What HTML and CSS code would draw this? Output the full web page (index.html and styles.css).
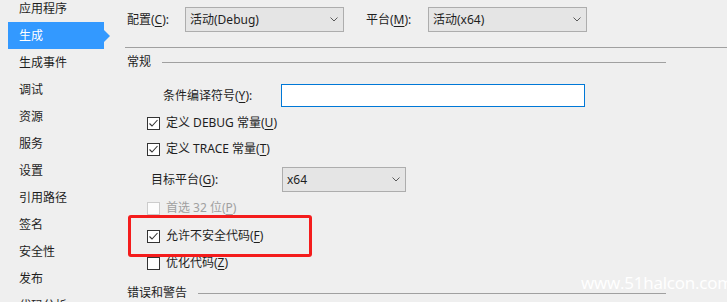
FILE: index.html
```html
<!DOCTYPE html>
<html lang="zh-CN">
<head>
<meta charset="utf-8">
<title>项目属性 - 生成</title>
<link rel="stylesheet" href="styles.css">
</head>
<body>
<div class="page">
  <ul class="nav">
    <li class="nav-item">应用程序</li>
    <li class="nav-item active">生成</li>
    <li class="nav-item">生成事件</li>
    <li class="nav-item">调试</li>
    <li class="nav-item">资源</li>
    <li class="nav-item">服务</li>
    <li class="nav-item">设置</li>
    <li class="nav-item">引用路径</li>
    <li class="nav-item">签名</li>
    <li class="nav-item">安全性</li>
    <li class="nav-item">发布</li>
    <li class="nav-item">代码分析</li>
  </ul>
  <div class="main">
    <div class="toolbar">
      <span class="tb-label">配置(<u>C</u>):</span>
      <div class="combo combo-wide"><span>活动(Debug)</span><svg class="chev" width="8" height="5" viewBox="0 0 8 5"><path d="M0.5 0.5 L4 4 L7.5 0.5" fill="none" stroke="#5a5a5a" stroke-width="1"/></svg></div>
      <span class="tb-label tb-label2">平台(<u>M</u>):</span>
      <div class="combo combo-wide"><span>活动(x64)</span><svg class="chev" width="8" height="5" viewBox="0 0 8 5"><path d="M0.5 0.5 L4 4 L7.5 0.5" fill="none" stroke="#5a5a5a" stroke-width="1"/></svg></div>
    </div>
    <div class="rule"></div>

    <div class="group-title first"><span>常规</span></div>

    <div class="row row-cond">
      <span class="cond-label">条件编译符号(<u>Y</u>):</span>
      <div class="textbox"></div>
    </div>

    <div class="row check-row r-debug">
      <span class="checkbox"><svg width="11" height="11" viewBox="0 0 11 11"><path d="M1.5 5.5 L4 8 L9.5 2" fill="none" stroke="#333" stroke-width="1.1"/></svg></span>
      <span class="label">定义 DEBUG 常量(<u>U</u>)</span>
    </div>

    <div class="row check-row r-trace">
      <span class="checkbox"><svg width="11" height="11" viewBox="0 0 11 11"><path d="M1.5 5.5 L4 8 L9.5 2" fill="none" stroke="#333" stroke-width="1.1"/></svg></span>
      <span class="label">定义 TRACE 常量(<u>T</u>)</span>
    </div>

    <div class="row row-platform">
      <span class="plat-label">目标平台(<u>G</u>):</span>
      <div class="combo combo-small"><span>x64</span><svg class="chev" width="8" height="5" viewBox="0 0 8 5"><path d="M0.5 0.5 L4 4 L7.5 0.5" fill="none" stroke="#5a5a5a" stroke-width="1"/></svg></div>
    </div>

    <div class="row check-row r-prefer disabled">
      <span class="checkbox"></span>
      <span class="label">首选 32 位(<u>P</u>)</span>
    </div>

    <div class="row check-row r-unsafe annot">
      <span class="checkbox"><svg width="11" height="11" viewBox="0 0 11 11"><path d="M1.5 5.5 L4 8 L9.5 2" fill="none" stroke="#333" stroke-width="1.1"/></svg></span>
      <span class="label">允许不安全代码(<u>F</u>)</span>
    </div>

    <div class="row check-row r-optimize">
      <span class="checkbox"></span>
      <span class="label">优化代码(<u>Z</u>)</span>
    </div>

    <div class="group-title second"><span>错误和警告</span></div>
  </div>
</div>
<div class="watermark">www.51halcon.com</div>
</body>
</html>
```
FILE: styles.css
```css
* { box-sizing: border-box; margin: 0; padding: 0; }
html, body { width: 727px; height: 302px; overflow: hidden; }
body {
  background: #efefef;
  font-family: "Noto Sans", "Noto Sans CJK SC", sans-serif;
  font-size: 12px;
  line-height: 16px;
  color: #1e1e1e;
  position: relative;
}
u { text-decoration: underline; text-underline-offset: 2px; }

.page { display: flex; height: 302px; }

.nav { width: 110px; flex: none; margin-top: -5px; list-style: none; }
.nav-item {
  height: 27px;
  line-height: 27px;
  margin-left: 8px;
  width: 96px;
  padding-left: 11px;
  position: relative;
  white-space: nowrap;
}
.nav-item.active { background: #3399ff; color: #fff; }
.nav-item.active::after {
  content: "";
  position: absolute;
  right: -6px;
  top: 50%;
  margin-top: -6px;
  border-left: 6px solid #3399ff;
  border-top: 6px solid transparent;
  border-bottom: 6px solid transparent;
}

.main { flex: 1; padding-left: 15px; }

.toolbar { display: flex; align-items: center; height: 25px; margin-top: 7px; }
.tb-label { width: 60px; padding-left: 2px; white-space: nowrap; }
.tb-label2 { margin-left: 22px; width: 62px; padding-left: 0; }

.combo {
  height: 25px;
  border: 1px solid #adadad;
  background: #e5e5e5;
  display: flex;
  align-items: center;
  justify-content: space-between;
  padding: 0 5px 0 4px;
  flex: none;
}
.combo-wide { width: 159px; }
.combo-small { width: 124px; }
.chev { display: block; }

.rule { height: 1px; background: #a0a0a0; margin-top: 15px; }

.group-title {
  display: flex;
  align-items: center;
  height: 16px;
  width: 541px;
  padding-left: 2px;
}
.group-title::after {
  content: "";
  flex: 1;
  height: 1px;
  background: #a0a0a0;
  margin-left: 11px;
}
.group-title.first { margin-top: 6px; }
.group-title.second { margin-top: 12px; }

.row { display: flex; align-items: center; width: 541px; white-space: nowrap; }

.row-cond { height: 23px; margin-top: 14px; padding-left: 38px; }
.cond-label { width: 118px; }
.textbox { width: 304px; height: 23px; border: 1px solid #0078d7; background: #fff; }

.check-row { height: 20px; padding-left: 22px; }
.checkbox {
  width: 13px;
  height: 13px;
  border: 1px solid #333;
  background: #fff;
  margin-right: 6px;
  flex: none;
  display: flex;
}
.checkbox svg { display: block; }

.r-debug { margin-top: 6px; }
.r-trace { margin-top: 6px; }
.row-platform { height: 25px; margin-top: 8px; padding-left: 26px; }
.plat-label { width: 131px; }
.r-prefer { margin-top: 6px; }
.r-unsafe { margin-top: 8px; }
.r-optimize { margin-top: 7px; }

.disabled { color: #a0a0a0; }
.disabled .checkbox { border-color: #cccccc; background: #fcfcfc; }

.annot { position: relative; }
.annot::before {
  content: "";
  position: absolute;
  left: 3px;
  top: -11px;
  width: 178px;
  height: 36px;
  border: 3px solid #f41c1c;
  border-radius: 3px;
}

.watermark {
  position: absolute;
  left: 581px;
  top: 271px;
  font-family: "Open Sans", sans-serif;
  font-size: 17px;
  line-height: 24px;
  letter-spacing: -0.2px;
  color: #ffffff;
  white-space: nowrap;
}
```
